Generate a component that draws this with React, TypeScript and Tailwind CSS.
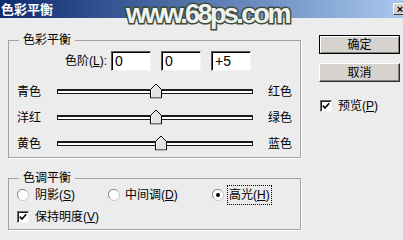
const font = "font-['Liberation_Sans','Noto_Sans_CJK_SC',sans-serif]";

function Thumb({ left }: { left: number }) {
  return (
    <svg
      width="12"
      height="15"
      viewBox="0 0 12 15"
      className="absolute top-1/2 -translate-y-1/2"
      style={{ left }}
    >
      <path d="M6 0.5 L11.5 6 L11.5 14.5 L0.5 14.5 L0.5 6 Z" fill="#e4e4e4" stroke="#000" />
      <path d="M1.5 13.5 L1.5 6.4 L6 1.9" fill="none" stroke="#fff" />
    </svg>
  );
}

function SliderRow({ left, right, value }: { left: string; right: string; value: number }) {
  return (
    <div className="flex h-[26px] items-center">
      <div className="w-[48px] pl-[8px] pt-[2px] text-[12px]">{left}</div>
      <div className="relative flex h-[26px] w-[196px] items-center">
        <div className="h-[5px] w-full border border-[#1a1a1a] border-t-2 bg-white" />
        <Thumb left={93 + value * 0.93} />
      </div>
      <div className="ml-[15px] pt-[2px] text-[12px]">{right}</div>
    </div>
  );
}

function NumBox({ value }: { value: string }) {
  return (
    <div className="flex h-[20px] w-[40px] items-center border border-t-[#5a5a5a] border-l-[#5a5a5a] border-r-[#f4f4f4] border-b-[#f4f4f4] bg-white pl-[3px] text-[14px] shadow-[inset_1px_1px_0_#000]">
      {value}
    </div>
  );
}

function Radio({ checked }: { checked?: boolean }) {
  return (
    <svg width="12" height="12" viewBox="0 0 12 12">
      <circle cx="6" cy="6" r="5.5" fill="#fff" stroke="#c4c4c4" />
      <path d="M1.8 9 A5 5 0 0 1 9 1.8" fill="none" stroke="#8a8a8a" />
      {checked && <circle cx="6" cy="6" r="2" fill="#000" />}
    </svg>
  );
}

function Check() {
  return (
    <div className="flex h-[12px] w-[12px] items-center justify-center border border-t-[#6a6a6a] border-l-[#6a6a6a] border-r-[#f4f4f4] border-b-[#f4f4f4] bg-white shadow-[inset_1px_1px_0_#222]">
      <svg width="8" height="8" viewBox="0 0 8 8">
        <path d="M0.8 3.6 L3 6 L7.2 1.2" fill="none" stroke="#000" strokeWidth="1.6" />
      </svg>
    </div>
  );
}

export default function App() {
  return (
    <div className={`relative h-[240px] w-[403px] overflow-hidden bg-[#ececec] text-black ${font}`}>
      <div className="flex h-[18px] items-center bg-linear-to-r from-[#0f2b70] to-[#a9c8ef]">
        <span className="pl-[1px] text-[13px] font-bold leading-none text-white">色彩平衡</span>
        <div className="ml-auto -mr-[4px] flex h-[12px] w-[14px] items-center justify-center border border-t-white border-l-white border-r-[#404040] border-b-[#404040] bg-[#d4d0c8] text-[11px] font-bold leading-none">
          ×
        </div>
      </div>

      <div className="pointer-events-none absolute left-[126px] top-[-1px] text-[27px] font-bold leading-[30px] tracking-[-2.6px] text-[#eef3ee] [-webkit-text-stroke:3px_#3f4c40] [paint-order:stroke_fill]">
        www.68ps.com
      </div>

      <div className="flex">
        <div className="w-[301px]">
          <fieldset className="ml-[8px] mt-[14px] h-[126px] border border-[#a3a3a3] shadow-[1px_1px_0_#fff]">
            <legend className="ml-[10px] px-[4px] text-[12px] leading-[16px]">色彩平衡</legend>
            <div className="flex items-center pt-[3px]">
              <div className="w-[98px] text-right text-[12px]">
                色阶(<u>L</u>):
              </div>
              <div className="ml-[4px] flex gap-[10px]">
                <NumBox value="0" />
                <NumBox value="0" />
                <NumBox value="+5" />
              </div>
            </div>
            <div className="mt-[7px] flex flex-col">
              <SliderRow left="青色" right="红色" value={0} />
              <SliderRow left="洋红" right="绿色" value={0} />
              <SliderRow left="黄色" right="蓝色" value={5} />
            </div>
          </fieldset>

          <fieldset className="ml-[8px] mt-[12px] h-[60px] border border-[#a3a3a3] shadow-[1px_1px_0_#fff]">
            <legend className="ml-[10px] px-[4px] text-[12px] leading-[16px]">色调平衡</legend>
            <div className="flex h-[18px] items-center pl-[8px] text-[12px]">
              <div className="flex w-[91px] items-center gap-[6px]">
                <Radio />
                <span>
                  阴影(<u>S</u>)
                </span>
              </div>
              <div className="flex w-[104px] items-center gap-[5px]">
                <Radio />
                <span>
                  中间调(<u>D</u>)
                </span>
              </div>
              <div className="flex items-center gap-[3px]">
                <Radio checked />
                <span className="border border-dotted border-black px-[1px] leading-[18px]">
                  高光(<u>H</u>)
                </span>
              </div>
            </div>
            <div className="mt-[4px] flex items-center gap-[6px] pl-[8px] text-[12px]">
              <Check />
              <span>
                保持明度(<u>V</u>)
              </span>
            </div>
          </fieldset>
        </div>

        <div className="ml-[18px] mt-[17px] flex w-[81px] flex-col text-[12px]">
          <div className="flex h-[19px] items-center justify-center border border-black bg-[#d6d3ce] shadow-[inset_1px_1px_0_#fff,inset_-1px_-1px_0_#808080]">
            确定
          </div>
          <div className="mt-[9px] flex h-[19px] items-center justify-center border border-t-white border-l-white border-r-[#303030] border-b-[#303030] bg-[#d6d3ce] shadow-[inset_-1px_-1px_0_#808080]">
            取消
          </div>
          <div className="ml-[1px] mt-[15px] flex items-center gap-[6px]">
            <Check />
            <span>
              预览(<u>P</u>)
            </span>
          </div>
        </div>
      </div>
    </div>
  );
}
